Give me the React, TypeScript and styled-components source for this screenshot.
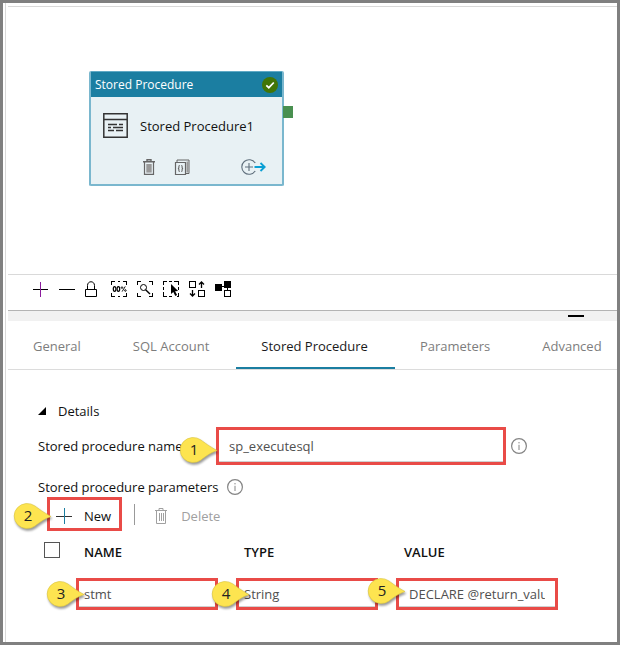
import React, { useState } from "react";
import styled, { createGlobalStyle } from "styled-components";

const Global = createGlobalStyle`
  *, *::before, *::after { box-sizing: border-box; }
  body {
    margin: 0;
    background: #fff;
    color: #111;
    font: 13px/20px "Open Sans", "Segoe UI", sans-serif;
  }
  button, input { font: inherit; color: inherit; }
  svg { display: block; }
`;

const Frame = styled.div`
  min-height: 100vh;
  display: flex;
  border: 3px solid #808080;
  padding-left: 2px;
`;

const Main = styled.main`
  flex: 1;
  min-width: 0;
  border-left: 1px solid #d9d9d9;
  padding: 3px 0 0 2px;
`;

const Canvas = styled.section`
  position: relative;
  height: 269px;
  border-top: 1px solid #d9d9d9;
  border-bottom: 1px solid #d9d9d9;
`;

const Node = styled.article`
  position: absolute;
  left: 81px;
  top: 64px;
  width: 195px;
  border: 2px solid #7ab7ce;
  border-top: 1px solid #5fa9c5;
  border-radius: 2px;
  background: #e8f1f4;
`;

const NodeHeader = styled.header`
  display: flex;
  align-items: center;
  justify-content: space-between;
  height: 25px;
  padding: 0 4px;
  background: #1b7ea1;
  color: #fff;
  font-size: 12px;
`;

const NodeTitle = styled.div`
  display: flex;
  align-items: center;
  gap: 12px;
  height: 57px;
  padding-left: 12px;
`;

const NodeActions = styled.div`
  display: flex;
  align-items: center;
  gap: 17px;
  height: 30px;
  padding: 0 16px 5px 50px;
`;

const Port = styled.span`
  position: absolute;
  left: 192px;
  top: 34px;
  width: 10px;
  height: 12px;
  background: #499050;
`;

const IconButton = styled.button<{ $end?: boolean }>`
  display: block;
  padding: 0;
  border: 0;
  background: none;
  cursor: pointer;
  margin-left: ${(p) => (p.$end ? "auto" : "0")};
`;

const Toolbar = styled.div`
  display: flex;
  align-items: center;
  gap: 10px;
  height: 36px;
  padding: 0 25px 7px;
  border-bottom: 1px solid #b3b3b3;
`;

const Splitter = styled.div`
  display: flex;
  justify-content: flex-end;
  height: 10px;
  padding: 4px 33px 0 0;
  background: #f1f1f1;
`;

const Collapse = styled.button`
  width: 16px;
  height: 2px;
  padding: 0;
  border: 0;
  background: #000;
`;

const Tabs = styled.div`
  display: flex;
  height: 49px;
  border-bottom: 1px solid #dcdcdc;
  overflow: hidden;
`;

const Tab = styled.button<{ $active: boolean }>`
  flex: none;
  padding: 4px 27px 0 25px;
  border: 0;
  border-bottom: 2px solid ${(p) => (p.$active ? "#1b7ea1" : "transparent")};
  background: none;
  color: ${(p) => (p.$active ? "#1a1a1a" : "#7d7d7d")};
  white-space: nowrap;
`;

const Panel = styled.section`
  padding: 31px 59px 30px 30px;
`;

const Heading = styled.h2`
  display: flex;
  align-items: center;
  gap: 12px;
  margin: 0 0 6px;
  font-size: 13px;
  font-weight: 400;
`;

const NameRow = styled.div`
  display: grid;
  grid-template-columns: 178px 1fr 16px;
  align-items: center;
  padding-right: 36px;
  margin-bottom: 12px;
`;

const Info = styled.span`
  display: block;
  margin-left: 5px;
`;

const ParamsTitle = styled.div`
  display: flex;
  align-items: center;
  gap: 3px;
`;

const Marked = styled.div`
  position: relative;
`;

const Field = styled.input<{ $tall?: boolean; $inset?: boolean }>`
  display: block;
  width: 100%;
  height: ${(p) => (p.$tall ? 38 : 32)}px;
  padding: 0 ${(p) => (p.$inset ? 10 : 5)}px;
  border: 3px solid #e94b47;
  border-radius: 0;
  outline: 0;
  background: #fff;
  box-shadow: inset 0 -1px #d0d0d0;
  color: #505050;
`;

const Commands = styled.div`
  display: flex;
  align-items: center;
  padding-left: 9px;
`;

const Command = styled.button<{ $marked?: boolean }>`
  display: flex;
  align-items: center;
  gap: 12px;
  height: 34px;
  padding: ${(p) => (p.$marked ? "3px 8px 0 6px" : "3px 18px 0")};
  border: ${(p) => (p.$marked ? "3px solid #e94b47" : "0")};
  background: none;
  color: ${(p) => (p.$marked ? "#111" : "#a0a0a0")};
`;

const Divider = styled.span`
  width: 1px;
  height: 21px;
  margin-left: 12px;
  background: #999;
`;

const Table = styled.table`
  width: 100%;
  table-layout: fixed;
  border-collapse: collapse;
`;

const HeadCell = styled.th<{ $width?: string; $check?: boolean }>`
  width: ${(p) => p.$width ?? "auto"};
  height: 41px;
  padding: ${(p) => (p.$check ? "0 0 3px 6px" : "0 8px")};
  font-weight: 600;
  text-align: left;
  vertical-align: middle;
`;

const Cell = styled.td<{ $last?: boolean }>`
  padding: 6px ${(p) => (p.$last ? 0 : 18)}px 0 0;
`;

const CheckBox = styled.input`
  appearance: none;
  display: block;
  width: 16px;
  height: 16px;
  margin: 0;
  border: 1px solid #555;
  background: #fff;
  &:checked { background: #1b7ea1; }
`;

const Pin = styled.span<{ $left: number; $top: number }>`
  position: absolute;
  z-index: 1;
  left: ${(p) => p.$left}px;
  top: ${(p) => p.$top}px;
  width: 38px;
  height: 28px;
  pointer-events: none;
  svg { filter: drop-shadow(1px 2px 1px rgba(0, 0, 0, 0.4)); overflow: visible; }
`;

const PinNumber = styled.span`
  position: absolute;
  inset: 2px 10px auto 0;
  text-align: center;
  font-size: 15px;
  color: #222;
`;

const Callout = ({ n, left, top }: { n: number; left: number; top: number }) => (
  <Pin $left={left} $top={top}>
    <svg width="38" height="28">
      <path d="M37 13.5 C29 9 25 6 21 3 A13 12.5 0 1 0 21 23 C26 19 30 16 37 13.5Z" fill="#fde450" stroke="#d9c23c" strokeWidth="0.6" />
    </svg>
    <PinNumber>{n}</PinNumber>
  </Pin>
);

const InfoIcon = () => (
  <svg width="16" height="16" fill="none" stroke="#848484">
    <circle cx="8" cy="8" r="7.4" strokeWidth="1.2" />
    <path d="M8 6.8V12M8 4v1.4" />
  </svg>
);

const tools: { label: string; icon: React.ReactNode }[] = [
  { label: "Zoom in", icon: <><path d="M0 8.5h15" /><path d="M7.5 1v15" stroke="#8a1c9c" /></> },
  { label: "Zoom out", icon: <path d="M0 8.5h16" /> },
  { label: "Lock canvas", icon: <path d="M.5 8.500h11v7H.5zM2.500 8V4.500C2.500-.5 9.500-.5 9.500 4.500V8" shapeRendering="auto" /> },
  {
    label: "Zoom to 100%",
    icon: (
      <>
        <path d="M.5 4V.5H4M7 .5h2M12 .5h3.500V4M.5 12v3.500H4M7 15.500h2M12 15.500h3.500V12" />
        <g shapeRendering="auto" strokeWidth="1.200">
          <ellipse cx="3.600" cy="8" rx="1.300" ry="2.400" />
          <ellipse cx="7.400" cy="8" rx="1.300" ry="2.400" />
          <path d="M14.300 5.400l-3.200 5.200" strokeWidth="0.900" />
          <circle cx="11" cy="6.600" r=".8" strokeWidth="0.900" />
          <circle cx="14.400" cy="9.500" r=".8" strokeWidth="0.900" />
        </g>
      </>
    ),
  },
  {
    label: "Zoom to fit",
    icon: (
      <>
        <path d="M.5 4V.5H4M12 .5h3.500V4M.5 12v3.500H4M12 15.500h3.500V12" />
        <g shapeRendering="auto">
          <circle cx="6.500" cy="6.500" r="3" />
          <path d="M8.600 8.700L13 13" strokeWidth="1.400" />
        </g>
      </>
    ),
  },
  {
    label: "Multi select",
    icon: (
      <>
        <path d="M.5 4V.5H4M6 .5h3M11 .5h4.500V4M.5 6v3M15.500 6v3M.5 11v4.500H4M6 15.500h3M15.500 12v3.500H14" />
        <path d="M8 3v10l2.300-2 2 4 1.800-.9-2-3.900 3-.2z" fill="#000" stroke="none" shapeRendering="auto" />
      </>
    ),
  },
  {
    label: "Auto align",
    icon: (
      <>
        <path d="M.5 .5h6v6h-6zM9.500 9.500h6v6h-6z" />
        <path d="M12.500 7V1M10 3.500L12.500 1 15 3.500M3.500 9v6M1 12.500L3.500 15 6 12.500" strokeWidth="1.300" shapeRendering="auto" />
      </>
    ),
  },
  {
    label: "Show lineage",
    icon: (
      <>
        <path d="M0 3h7v7H0zM9 0h7v7H9z" fill="#000" stroke="none" />
        <path d="M7 5.500h2M12.500 7v2M9.500 9.500h6v6h-6z" />
      </>
    ),
  },
];

const tabs = ["General", "SQL Account", "Stored Procedure", "Parameters", "Advanced"];

export default function App() {
  const [active, setActive] = useState("Stored Procedure");
  return (
    <Frame>
      <Global />
      <Main>
        <Canvas>
          <Node>
            <NodeHeader>
              Stored Procedure
              <svg width="16" height="16" role="img" aria-label="Valid">
                <circle cx="8" cy="8" r="8" fill="#417505" />
                <path d="M4.300 8.300l2.500 2.400 5-5.200" fill="none" stroke="#fff" strokeWidth="1.700" />
              </svg>
            </NodeHeader>
            <NodeTitle>
              <svg width="25" height="25" fill="none" stroke="#333" strokeWidth="1.500">
                <path d="M.8.8h23.400v23.400H.8zM.8 6.500h23.400" />
                <path d="M5 11.500h9M16 11.500h4M5 14.500h3M10 14.500h10M5 17.500h6M13 17.500h7" />
              </svg>
              Stored Procedure1
            </NodeTitle>
            <NodeActions>
              <IconButton aria-label="Delete activity">
                <svg width="16" height="16" fill="none" stroke="#666">
                  <path d="M2 2.800h12M6 2.500V.7h4v1.800" strokeWidth="1.400" />
                  <path d="M3.500 3v12.400h9V3" strokeWidth="1.200" />
                  <path d="M5.300 5h5.400v8.600H5.300z" fill="#999" stroke="none" />
                </svg>
              </IconButton>
              <IconButton aria-label="View code">
                <svg width="16" height="16" fill="none" stroke="#666">
                  <path d="M1.500 3.500h10v12h-10z" strokeWidth="1.200" />
                  <path d="M3 3V1h12v13.500h-3" />
                  <path d="M12.500 2.500h2v11h-2z" fill="#999" stroke="none" />
                  <path d="M5.800 6.500c-1.200 0-.8 1-.9 2 0 .7-.4 1-1 1 .6 0 1 .3 1 1 .1 1-.3 2 .9 2M7.200 6.500c1.200 0 .8 1 .9 2 0 .7.4 1 1 1-.6 0-1 .3-1 1-.1 1 .3 2-.9 2" strokeWidth="1.100" />
                </svg>
              </IconButton>
              <IconButton aria-label="Add output" $end>
                <svg width="25" height="16" fill="none">
                  <path d="M14.200 4A7.300 7.300 0 1 0 14.200 12M4 8h8M8 4v8" stroke="#5f6f7c" strokeWidth="1.100" />
                  <path d="M13.500 8h10M19.500 4l4.200 4-4.200 4" stroke="#0a9fd4" strokeWidth="1.900" />
                </svg>
              </IconButton>
            </NodeActions>
            <Port />
          </Node>
        </Canvas>

        <Toolbar role="toolbar" aria-label="Canvas tools">
          {tools.map((t) => (
            <IconButton key={t.label} aria-label={t.label}>
              <svg width="16" height="16" fill="none" stroke="#000" shapeRendering="crispEdges">{t.icon}</svg>
            </IconButton>
          ))}
        </Toolbar>
        <Splitter>
          <Collapse aria-label="Collapse panel" />
        </Splitter>

        <Tabs role="tablist">
          {tabs.map((t) => (
            <Tab key={t} role="tab" aria-selected={t === active} $active={t === active} onClick={() => setActive(t)}>
              {t}
            </Tab>
          ))}
        </Tabs>

        <Panel>
          <Heading>
            <svg width="8" height="8"><path d="M8 0v8H0z" /></svg>
            Details
          </Heading>
          <NameRow>
            <label htmlFor="proc-name">Stored procedure name</label>
            <Marked>
              <Field id="proc-name" $tall $inset defaultValue="sp_executesql" />
              <Callout n={1} left={-36} top={10} />
            </Marked>
            <Info><InfoIcon /></Info>
          </NameRow>
          <ParamsTitle>
            Stored procedure parameters
            <Info><InfoIcon /></Info>
          </ParamsTitle>
          <Commands>
            <Marked>
              <Command $marked>
                <svg width="16" height="16" fill="none" shapeRendering="crispEdges">
                  <path d="M0 8.500h16" stroke="#333" />
                  <path d="M8.500 0v16" stroke="#1b7ea1" />
                </svg>
                New
              </Command>
              <Callout n={2} left={-33} top={6} />
            </Marked>
            <Divider />
            <Command disabled>
              <svg width="16" height="16" fill="none" stroke="#a0a0a0">
                <path d="M2 2.500h12M6 2.500v-2h4v2M3.500 2.500v13h9v-13M6.500 5v8M8.500 5v8M10.500 5v8" />
              </svg>
              Delete
            </Command>
          </Commands>
          <Table>
            <thead>
              <tr>
                <HeadCell $check $width="38px"><CheckBox type="checkbox" aria-label="Select all parameters" /></HeadCell>
                <HeadCell $width="160px">NAME</HeadCell>
                <HeadCell $width="160px">TYPE</HeadCell>
                <HeadCell>VALUE</HeadCell>
              </tr>
            </thead>
            <tbody>
              <tr>
                <Cell />
                <Cell>
                  <Marked>
                    <Field aria-label="Name" defaultValue="stmt" />
                    <Callout n={3} left={-29} top={3} />
                  </Marked>
                </Cell>
                <Cell>
                  <Marked>
                    <Field aria-label="Type" defaultValue="String" />
                    <Callout n={4} left={-24} top={3} />
                  </Marked>
                </Cell>
                <Cell $last>
                  <Marked>
                    <Field aria-label="Value" $inset defaultValue="DECLARE @return_value int" />
                    <Callout n={5} left={-28} top={0} />
                  </Marked>
                </Cell>
              </tr>
            </tbody>
          </Table>
        </Panel>
      </Main>
    </Frame>
  );
}
